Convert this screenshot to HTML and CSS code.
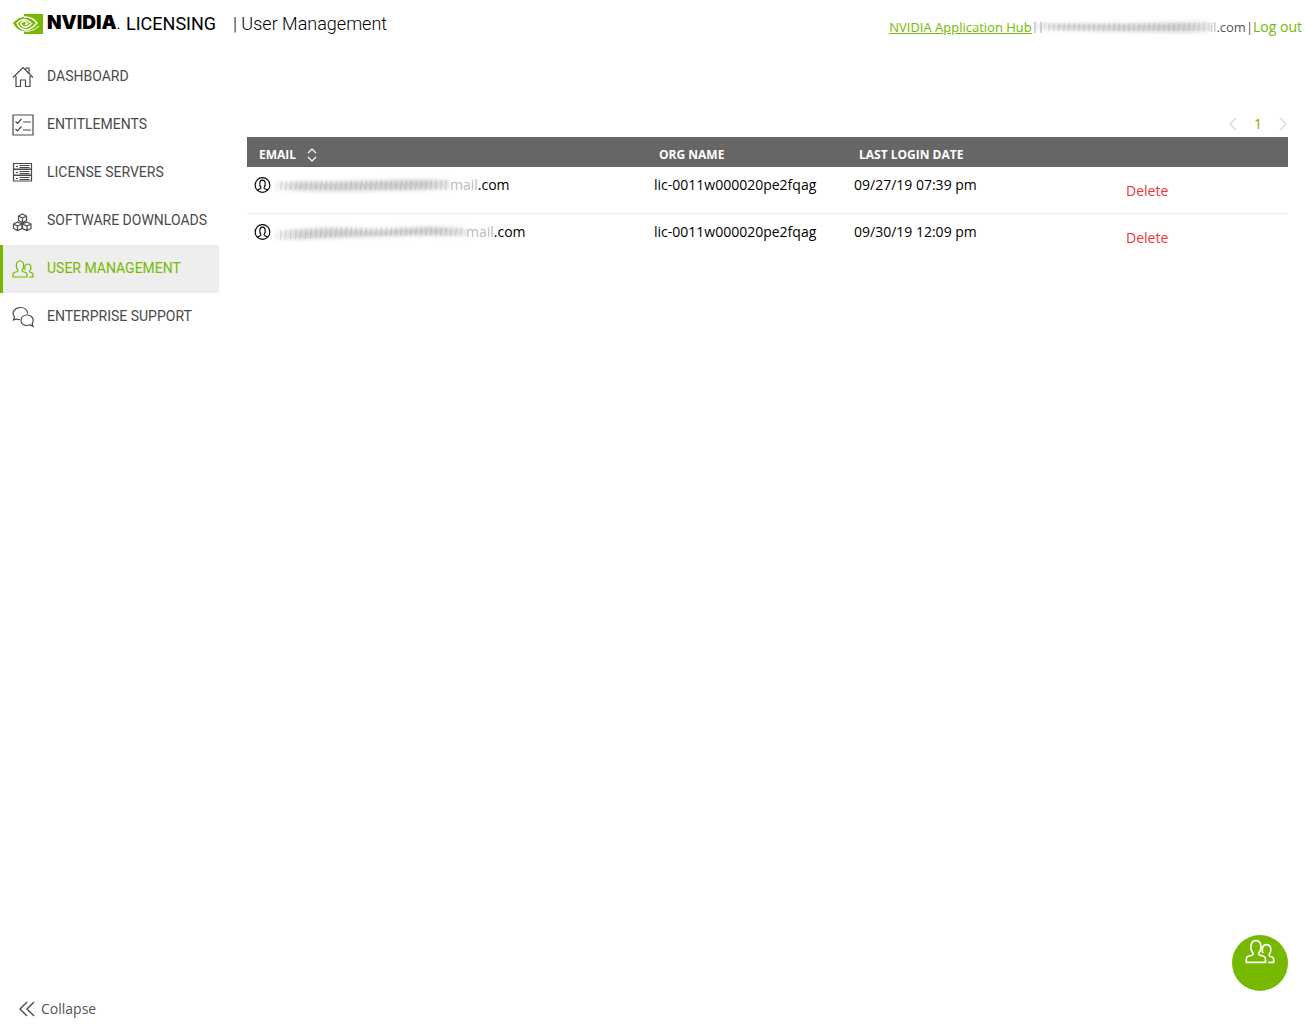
FILE: index.html
```html
<!DOCTYPE html>
<html lang="en">
<head>
<meta charset="utf-8">
<title>NVIDIA Licensing | User Management</title>
<link rel="stylesheet" href="styles.css">
</head>
<body>
<svg class="defs" aria-hidden="true">
  <defs>
    <filter id="soft" x="-5%" y="-40%" width="110%" height="180%"><feGaussianBlur stdDeviation="2 2"/></filter>
    <linearGradient id="fade"><stop offset="0" stop-color="#aaa" stop-opacity=".1"/><stop offset=".15" stop-color="#aaa" stop-opacity=".55"/><stop offset=".85" stop-color="#aaa" stop-opacity=".6"/><stop offset="1" stop-color="#aaa" stop-opacity=".3"/></linearGradient>
    <pattern id="ticks" width="5" height="20" patternUnits="userSpaceOnUse"><path d="M3 0 1 20" stroke="#888" stroke-opacity=".25"/></pattern>
    <symbol id="people" viewBox="0 0 22 18">
      <path d="M1 17v-3q0-1 1.500-1.500l3-1q.8-.4.4-1.500C4.500 8.500 4 6.500 4.400 4.500 4.800 2 6.200 1 8 1s3.200 1 3.600 3.500c.4 2-.1 4-1.500 5.500-.4 1.100-.4 1.100.4 1.500l3 1Q15 13 15 14v3z"/>
      <path d="M13.200 10.200C12.300 8.500 12.200 4 15.800 4s3.600 4.500 2.400 6.200c-.6.900-.7 1.800.2 2.200l1.500.6q1.100.5 1.100 1.500V17h-4"/>
    </symbol>
    <symbol id="person" viewBox="0 0 18 18">
      <circle cx="9" cy="9" r="7.800"/>
      <path d="M3.500 14.200 6.500 13q1.300-.6.600-1.900C5.700 9.600 5.400 3.800 9 3.800s3.300 5.800 1.900 7.300q-.7 1.300.6 1.900l3 1.200"/>
    </symbol>
  </defs>
</svg>
<header class="topbar">
  <div class="brand">
    <svg class="eye" viewBox="0 0 30 20" aria-hidden="true">
      <path fill="#76b900" d="M11 0h19v20H11z"/>
      <path fill="#76b900" d="M0 9Q5 3 11 3v14Q3 16 0 9z"/>
      <path d="M11 3Q19 2.500 24 9q-5 6-11 7-7-1-9-7 6-6 12-1.500l2.500 2Q14 14 11 13 8 11.500 7.500 9.500 11 5 14.500 9.500L12 11" fill="none" stroke="#fff" stroke-width="1.500"/>
      <path d="M11 17q8 1.500 15-5" fill="none" stroke="#fff" stroke-width="1"/>
    </svg>
    <span class="wordmark">NVIDIA<span class="dot">.</span></span>
    <span class="product">LICENSING</span>
  </div>
  <h1 class="page-title">| User Management</h1>
  <div class="account">
    <a class="hub" href="#">NVIDIA Application Hub</a>
    <svg class="smudge smudge-top" viewBox="0 0 178 20" preserveAspectRatio="none" aria-hidden="true"><path d="M3 5v11M9 5v11" stroke="#bbb"/><path d="M0 6 22 7 100 7 178 5V14L170 15 80 14 0 12z" fill="url(#fade)" filter="url(#soft)"/><path d="M12 6H178V14H12z" fill="url(#ticks)"/></svg>
    <span class="faded">il</span><span class="domain">.com</span><span class="bar">|</span><a class="logout" href="#">Log out</a>
  </div>
</header>
<div class="layout">
  <aside class="sidebar">
    <nav>
      <a class="item" href="#"><svg class="icon" viewBox="0 0 22 22" aria-hidden="true"><path d="m1 11.500 10-10 10 10M4 10v10.500h4.500V14h5v6.500H18V10M14 3.500V2h3v5"/></svg>DASHBOARD</a>
      <a class="item" href="#"><svg class="icon" viewBox="0 0 22 22" aria-hidden="true"><path d="M1 1h20v20H1zM3.500 7.500l2 2 4-4.500M3.500 15l2 2 4-4.500M11 8h8M11 16h8"/></svg>ENTITLEMENTS</a>
      <a class="item" href="#"><svg class="icon" viewBox="0 0 22 22" aria-hidden="true"><path d="M1.500 1.500h18V7h-18zM1.500 7.500h18V13h-18zM1.500 13.500h18V19h-18zM4 4.500h2M4 10.500h2M4 16.500h2M7.500 3.500h10M7.500 5.500h10M7.500 9.500h10M7.500 11.500h10M7.500 15.500h10M7.500 17.500h10"/></svg>LICENSE SERVERS</a>
      <a class="item" href="#"><svg class="icon" viewBox="0 0 22 22" aria-hidden="true"><path d="m10.500 4 4 2v4.500l-4 2-4-2V6zM6.500 6l4 2 4-2M10.500 8v4.500M5.500 12l4.500 2v4.500l-4.500 2-4-2V14zM1.500 14l4 2 4.500-2M5.500 16v4.500M15 12l4 2v4.500l-4 2-4.500-2V14zM10.500 14l4.500 2 4-2M15 16v4.500"/></svg>SOFTWARE DOWNLOADS</a>
      <a class="item active" href="#" aria-current="page"><svg class="icon" aria-hidden="true"><use href="#people"/></svg>USER MANAGEMENT</a>
      <a class="item" href="#"><svg class="icon" viewBox="0 0 22 22" aria-hidden="true"><path d="M8 13.500q-2 .3-3.500-.5L1.500 14l1-3C-1 6 3 1.500 8.500 1.500c4 0 7 2.500 7.200 6.200M15 9c-3.500 0-6 2.300-6 5.300s2.500 5.200 6 5.200q1.700 0 3-.7l3 1.700-.8-3C23 13 19.500 9 15 9z"/></svg>ENTERPRISE SUPPORT</a>
    </nav>
    <button class="collapse" type="button"><svg viewBox="0 0 16 16" aria-hidden="true"><path d="M8 1 1 8l7 7M15 1 8 8l7 7"/></svg>Collapse</button>
  </aside>
  <main class="content">
    <nav class="pager" aria-label="Pages">
      <button type="button" aria-label="Previous page"><svg viewBox="0 0 9 14"><path d="M8 1 2 7l6 6"/></svg></button>
      <a href="#">1</a>
      <button type="button" aria-label="Next page"><svg viewBox="0 0 9 14"><path d="m1 1 6 6-6 6"/></svg></button>
    </nav>
    <table class="users">
      <colgroup><col class="c-email"><col class="c-org"><col class="c-date"><col></colgroup>
      <thead>
        <tr><th><button class="sort" type="button">EMAIL<svg viewBox="0 0 10 14" aria-hidden="true"><path d="m1 5 4-4 4 4M1 9l4 4 4-4"/></svg></button></th><th>ORG NAME</th><th>LAST LOGIN DATE</th><th></th></tr>
      </thead>
      <tbody>
        <tr>
          <td><div class="email"><svg class="person" aria-hidden="true"><use href="#person"/></svg><svg class="smudge smudge-one" viewBox="0 0 176 20" preserveAspectRatio="none" aria-hidden="true"><path d="M0 7 60 7 130 5 176 5V14L130 15 60 16 0 15z" fill="url(#fade)" filter="url(#soft)"/><path d="M6 6 176 5V15H6z" fill="url(#ticks)"/></svg><span class="faded">mail</span><span>.com</span></div></td>
          <td>lic-0011w000020pe2fqag</td><td>09/27/19 07:39 pm</td>
          <td class="action"><button class="delete" type="button">Delete</button></td>
        </tr>
        <tr>
          <td><div class="email"><svg class="person" aria-hidden="true"><use href="#person"/></svg><svg class="smudge smudge-two" viewBox="0 0 192 20" preserveAspectRatio="none" aria-hidden="true"><path d="M0 9 60 6 100 8 155 5 192 6V14L150 13 80 15 0 18z" fill="url(#fade)" filter="url(#soft)"/><path d="M6 8 60 5 192 6V14L80 14 6 18z" fill="url(#ticks)"/></svg><span class="faded">mail</span><span>.com</span></div></td>
          <td>lic-0011w000020pe2fqag</td><td>09/30/19 12:09 pm</td>
          <td class="action"><button class="delete" type="button">Delete</button></td>
        </tr>
      </tbody>
    </table>
  </main>
</div>
<button class="fab" type="button" aria-label="Add user"><svg aria-hidden="true"><use href="#people"/></svg></button>
</body>
</html>
```
FILE: styles.css
```css
* { box-sizing: border-box; }
body {
  margin: 0;
  min-height: 100vh;
  display: flex;
  flex-direction: column;
  background: #fff;
  color: #000;
  font: 14px/20px "Open Sans", sans-serif;
}
button {
  margin: 0;
  padding: 0;
  border: 0;
  background: none;
  color: inherit;
  font: inherit;
  cursor: pointer;
}
a { color: #76b900; text-decoration: none; }
svg { flex: none; fill: none; stroke: currentColor; stroke-width: 1.2; }
.defs { position: absolute; width: 0; height: 0; }

.topbar {
  display: flex;
  align-items: center;
  height: 53px;
  padding: 0 6px 6px 13px;
}
.brand { display: flex; align-items: center; width: 220px; }
.eye { width: 30px; height: 20px; margin-right: 4px; stroke: none; }
.wordmark { width: 79px; font: 900 19px/24px Inter, sans-serif; }
.dot { font-size: 12px; font-weight: 400; }
.product { font: 18px/24px Roboto, sans-serif; }
.page-title { margin: 0; font: 300 18px/24px Roboto, sans-serif; }
.account {
  display: flex;
  align-items: center;
  margin-left: auto;
  padding-top: 6px;
  color: #555;
  font-size: 13px;
}
.hub { text-decoration: underline; }
.logout { font-size: 14px; }
.faded { color: #bbb; }
.smudge { height: 20px; stroke: none; }
.smudge-top { width: 178px; }
.smudge-one { width: 176px; }
.smudge-two { width: 192px; }

.layout { flex: 1; display: flex; }
.sidebar {
  flex: none;
  display: flex;
  flex-direction: column;
  justify-content: space-between;
  align-items: flex-start;
  width: 219px;
}
.sidebar nav { width: 100%; }
.item {
  display: flex;
  align-items: center;
  gap: 13px;
  height: 48px;
  padding: 0 0 2px 9px;
  border-left: 3px solid transparent;
  color: #4a4a4a;
  font: 14px/20px Roboto, sans-serif;
}
.item.active { border-color: #76b900; background: #eee; color: #76b900; }
.icon { width: 22px; height: 22px; margin-top: 2px; }
.collapse {
  display: flex;
  align-items: center;
  gap: 6px;
  padding: 0 19px 9px;
  color: #555;
}
.collapse svg { width: 16px; height: 16px; stroke-width: 1.5; }

.content { flex: 1; padding: 60px 20px 60px 28px; }
.pager {
  display: flex;
  justify-content: flex-end;
  align-items: center;
  gap: 17px;
  height: 24px;
  padding-bottom: 3px;
}
.pager button { display: flex; }
.pager svg { width: 9px; height: 14px; stroke: #e4e4e4; stroke-width: 2; }
.users { width: 100%; table-layout: fixed; border-collapse: separate; border-spacing: 0; }
.c-email { width: 400px; }
.c-org { width: 200px; }
.c-date { width: 272px; }
th {
  height: 30px;
  padding: 5px 12px 0;
  background: #666;
  color: #fff;
  font-size: 12px;
  line-height: 20px;
  text-align: left;
}
.sort { display: flex; align-items: center; gap: 11px; }
.sort svg { width: 10px; height: 14px; }
td { height: 47px; padding: 8px 7px 0; vertical-align: top; }
tbody tr:not(:last-child) td { border-bottom: 1px solid #eee; }
.email { display: flex; align-items: center; }
.person { width: 17px; height: 18px; margin-right: 3px; }
.action { padding-top: 14px; }
.delete { color: #f0323c; }

.fab {
  position: fixed;
  right: 20px;
  bottom: 37px;
  display: flex;
  justify-content: center;
  width: 56px;
  height: 56px;
  padding-top: 4px;
  border-radius: 50%;
  background: #76b900;
  color: #fff;
}
.fab svg { width: 30px; height: 25px; }
```
